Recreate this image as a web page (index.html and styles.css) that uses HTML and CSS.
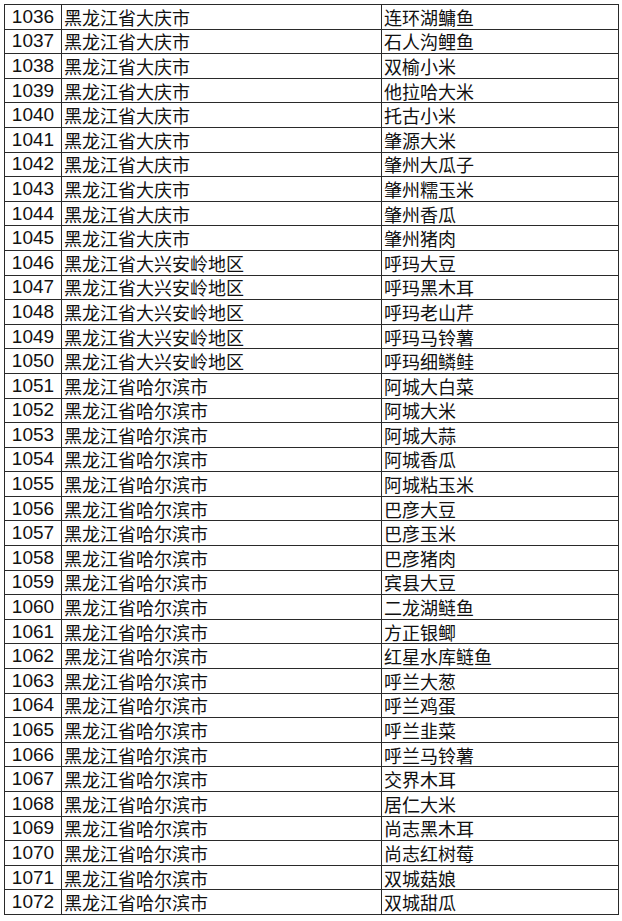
FILE: index.html
```html
<!DOCTYPE html>
<html lang="zh">
<head>
<meta charset="utf-8">
<link rel="stylesheet" href="styles.css">
</head>
<body>
<div class="sheet">
<table class="grid">
<colgroup><col class="c1"><col class="c2"><col class="c3"></colgroup>
<tbody>
<tr><td class="n">1036</td><td>黑龙江省大庆市</td><td>连环湖鳙鱼</td></tr>
<tr><td class="n">1037</td><td>黑龙江省大庆市</td><td>石人沟鲤鱼</td></tr>
<tr><td class="n">1038</td><td>黑龙江省大庆市</td><td>双榆小米</td></tr>
<tr><td class="n">1039</td><td>黑龙江省大庆市</td><td>他拉哈大米</td></tr>
<tr><td class="n">1040</td><td>黑龙江省大庆市</td><td>托古小米</td></tr>
<tr><td class="n">1041</td><td>黑龙江省大庆市</td><td>肇源大米</td></tr>
<tr><td class="n">1042</td><td>黑龙江省大庆市</td><td>肇州大瓜子</td></tr>
<tr><td class="n">1043</td><td>黑龙江省大庆市</td><td>肇州糯玉米</td></tr>
<tr><td class="n">1044</td><td>黑龙江省大庆市</td><td>肇州香瓜</td></tr>
<tr><td class="n">1045</td><td>黑龙江省大庆市</td><td>肇州猪肉</td></tr>
<tr><td class="n">1046</td><td>黑龙江省大兴安岭地区</td><td>呼玛大豆</td></tr>
<tr><td class="n">1047</td><td>黑龙江省大兴安岭地区</td><td>呼玛黑木耳</td></tr>
<tr><td class="n">1048</td><td>黑龙江省大兴安岭地区</td><td>呼玛老山芹</td></tr>
<tr><td class="n">1049</td><td>黑龙江省大兴安岭地区</td><td>呼玛马铃薯</td></tr>
<tr><td class="n">1050</td><td>黑龙江省大兴安岭地区</td><td>呼玛细鳞鲑</td></tr>
<tr><td class="n">1051</td><td>黑龙江省哈尔滨市</td><td>阿城大白菜</td></tr>
<tr><td class="n">1052</td><td>黑龙江省哈尔滨市</td><td>阿城大米</td></tr>
<tr><td class="n">1053</td><td>黑龙江省哈尔滨市</td><td>阿城大蒜</td></tr>
<tr><td class="n">1054</td><td>黑龙江省哈尔滨市</td><td>阿城香瓜</td></tr>
<tr><td class="n">1055</td><td>黑龙江省哈尔滨市</td><td>阿城粘玉米</td></tr>
<tr><td class="n">1056</td><td>黑龙江省哈尔滨市</td><td>巴彦大豆</td></tr>
<tr><td class="n">1057</td><td>黑龙江省哈尔滨市</td><td>巴彦玉米</td></tr>
<tr><td class="n">1058</td><td>黑龙江省哈尔滨市</td><td>巴彦猪肉</td></tr>
<tr><td class="n">1059</td><td>黑龙江省哈尔滨市</td><td>宾县大豆</td></tr>
<tr><td class="n">1060</td><td>黑龙江省哈尔滨市</td><td>二龙湖鲢鱼</td></tr>
<tr><td class="n">1061</td><td>黑龙江省哈尔滨市</td><td>方正银鲫</td></tr>
<tr><td class="n">1062</td><td>黑龙江省哈尔滨市</td><td>红星水库鲢鱼</td></tr>
<tr><td class="n">1063</td><td>黑龙江省哈尔滨市</td><td>呼兰大葱</td></tr>
<tr><td class="n">1064</td><td>黑龙江省哈尔滨市</td><td>呼兰鸡蛋</td></tr>
<tr><td class="n">1065</td><td>黑龙江省哈尔滨市</td><td>呼兰韭菜</td></tr>
<tr><td class="n">1066</td><td>黑龙江省哈尔滨市</td><td>呼兰马铃薯</td></tr>
<tr><td class="n">1067</td><td>黑龙江省哈尔滨市</td><td>交界木耳</td></tr>
<tr><td class="n">1068</td><td>黑龙江省哈尔滨市</td><td>居仁大米</td></tr>
<tr><td class="n">1069</td><td>黑龙江省哈尔滨市</td><td>尚志黑木耳</td></tr>
<tr><td class="n">1070</td><td>黑龙江省哈尔滨市</td><td>尚志红树莓</td></tr>
<tr><td class="n">1071</td><td>黑龙江省哈尔滨市</td><td>双城菇娘</td></tr>
<tr><td class="n">1072</td><td>黑龙江省哈尔滨市</td><td>双城甜瓜</td></tr>
</tbody>
</table>
</div>
</body>
</html>
```
FILE: styles.css
```css
html, body {
  margin: 0;
  padding: 0;
  background: #ffffff;
}
.sheet {
  padding: 4px 0 0 4px;
}
.grid {
  border-collapse: collapse;
  table-layout: fixed;
  width: 614px;
  color: #111;
  font-family: "Noto Sans CJK SC", "Liberation Sans", sans-serif;
  font-size: 18px;
}
.c1 { width: 57px; }
.c2 { width: 320px; }
.c3 { width: 237px; }
.grid td {
  border: 1px solid #2a2a2a;
  height: 23.6px;
  padding: 0 2px;
  line-height: 22px;
  white-space: nowrap;
  overflow: hidden;
  vertical-align: middle;
}
.grid td.n {
  font-family: "Liberation Sans", Arial, sans-serif;
  font-size: 19px;
  text-align: center;
  padding: 0;
}
```
